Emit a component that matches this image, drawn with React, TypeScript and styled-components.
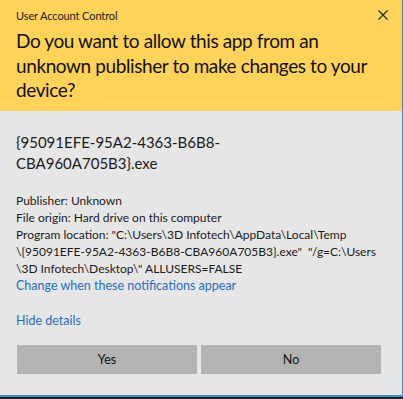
import React from "react";
import styled, { createGlobalStyle } from "styled-components";

const Global = createGlobalStyle`
  html, body { margin: 0; padding: 0; background: #1c2228; }
  body { width: 403px; height: 399px; overflow: hidden; font-family: "Lato", "Open Sans", sans-serif; }
`;

const Window = styled.div`
  width: 402px;
  height: 395px;
  border-right: 1px solid #3b8fce;
  border-bottom: 2px solid #3b8fce;
  display: flex;
  flex-direction: column;
  background: #e6e6e6;
`;

const Header = styled.div`
  background: #ffd35a;
  height: 111px;
  box-sizing: border-box;
  padding: 6px 16px 0 16px;
  display: flex;
  flex-direction: column;
`;

const TitleRow = styled.div`
  display: flex;
  align-items: center;
  justify-content: space-between;
  height: 18px;
`;

const Title = styled.span`
  font-size: 11px;
  letter-spacing: -0.1px;
  color: #1a1a1a;
  white-space: nowrap;
`;

const Close = styled.svg`
  width: 10px;
  height: 10px;
  margin-right: -2px;
`;

const Question = styled.div`
  margin-top: 5px;
  font-size: 19px;
  letter-spacing: -0.4px;
  line-height: 24.5px;
  color: #111;
  white-space: nowrap;
`;

const Body = styled.div`
  flex: 1;
  padding: 21px 16px 0 16px;
  display: flex;
  flex-direction: column;
`;

const FileName = styled.div`
  font-size: 15px;
  line-height: 21px;
  color: #1a1a1a;
  white-space: nowrap;
`;

const Details = styled.div`
  margin-top: 18px;
  font-size: 12px;
  line-height: 17px;
  color: #1a1a1a;
  white-space: pre;
`;

const Link = styled.a<{ $gap: number }>`
  display: block;
  margin-top: ${(p) => p.$gap}px;
  font-size: 12.5px;
  line-height: 17px;
  color: #1f6fc0;
  text-decoration: none;
  white-space: nowrap;
`;

const Buttons = styled.div`
  margin-top: 16px;
  display: grid;
  grid-template-columns: 180px 180px;
  gap: 4px;
  padding-left: 1px;
`;

const Button = styled.button`
  height: 29px;
  border: none;
  background: #b3b3b3;
  font-family: inherit;
  font-size: 12.5px;
  color: #111;
  padding: 0;
`;

export default function App() {
  return (
    <>
      <Global />
      <Window>
        <Header>
          <TitleRow>
            <Title>User Account Control</Title>
            <Close viewBox="0 0 10 10">
              <path d="M0.5 0.5 L9.5 9.5 M9.5 0.5 L0.5 9.5" stroke="#222" strokeWidth="1.1" fill="none" />
            </Close>
          </TitleRow>
          <Question>
            Do you want to allow this app from an
            <br />
            unknown publisher to make changes to your
            <br />
            device?
          </Question>
        </Header>
        <Body>
          <FileName>
            {"{95091EFE-95A2-4363-B6B8-"}
            <br />
            {"CBA960A705B3}.exe"}
          </FileName>
          <Details>
            {"Publisher: Unknown\n"}
            {"File origin: Hard drive on this computer\n"}
            {'Program location: "C:\\Users\\3D Infotech\\AppData\\Local\\Temp\n'}
            {'\\{95091EFE-95A2-4363-B6B8-CBA960A705B3}.exe"  "/g=C:\\Users\n'}
            {'\\3D Infotech\\Desktop\\" ALLUSERS=FALSE'}
          </Details>
          <Link $gap={0}>Change when these notifications appear</Link>
          <Link $gap={18}>Hide details</Link>
          <Buttons>
            <Button>Yes</Button>
            <Button>No</Button>
          </Buttons>
        </Body>
      </Window>
    </>
  );
}
